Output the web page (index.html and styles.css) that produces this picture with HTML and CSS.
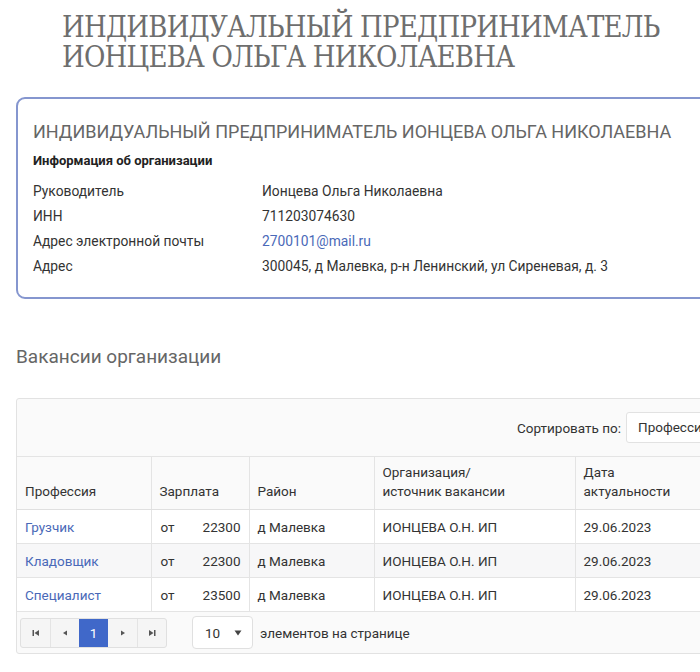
FILE: index.html
```html
<!DOCTYPE html>
<html lang="ru">
<head>
<meta charset="utf-8">
<link rel="stylesheet" href="styles.css">
</head>
<body>
<div class="page">
  <h1 class="title">ИНДИВИДУАЛЬНЫЙ ПРЕДПРИНИМАТЕЛЬ<br>ИОНЦЕВА ОЛЬГА НИКОЛАЕВНА</h1>
  <div class="card">
    <div class="card-title">ИНДИВИДУАЛЬНЫЙ ПРЕДПРИНИМАТЕЛЬ ИОНЦЕВА ОЛЬГА НИКОЛАЕВНА</div>
    <div class="card-sub">Информация об организации</div>
    <div class="info">
      <div class="lbl">Руководитель</div><div class="val">Ионцева Ольга Николаевна</div>
      <div class="lbl">ИНН</div><div class="val">711203074630</div>
      <div class="lbl">Адрес электронной почты</div><div class="val"><a class="link" href="#">2700101@mail.ru</a></div>
      <div class="lbl">Адрес</div><div class="val">300045, д Малевка, р-н Ленинский, ул Сиреневая, д. 3</div>
    </div>
  </div>
  <h2 class="section">Вакансии организации</h2>
  <div class="grid">
    <div class="toolbar">
      <span class="sort-label">Сортировать по:</span>
      <div class="sort-select">Профессия</div>
    </div>
    <table class="tbl">
      <colgroup>
        <col class="c1"><col class="c2"><col class="c3"><col class="c4"><col class="c5">
      </colgroup>
      <thead>
        <tr>
          <th>Профессия</th>
          <th>Зарплата</th>
          <th>Район</th>
          <th>Организация/<br>источник вакансии</th>
          <th>Дата<br>актуальности</th>
        </tr>
      </thead>
      <tbody>
        <tr>
          <td><a class="link" href="#">Грузчик</a></td>
          <td><div class="sal"><span>от</span><span>22300</span></div></td>
          <td>д Малевка</td>
          <td>ИОНЦЕВА О.Н. ИП</td>
          <td>29.06.2023</td>
        </tr>
        <tr class="alt">
          <td><a class="link" href="#">Кладовщик</a></td>
          <td><div class="sal"><span>от</span><span>22300</span></div></td>
          <td>д Малевка</td>
          <td>ИОНЦЕВА О.Н. ИП</td>
          <td>29.06.2023</td>
        </tr>
        <tr>
          <td><a class="link" href="#">Специалист</a></td>
          <td><div class="sal"><span>от</span><span>23500</span></div></td>
          <td>д Малевка</td>
          <td>ИОНЦЕВА О.Н. ИП</td>
          <td>29.06.2023</td>
        </tr>
      </tbody>
    </table>
    <div class="pager">
      <div class="pbtns">
        <span class="pb"><svg width="8" height="8" viewBox="0 0 8 8"><rect x="0.5" y="1" width="1.5" height="6" fill="#555"/><path d="M7 1 L2.5 4 L7 7 Z" fill="#555"/></svg></span>
        <span class="pb"><svg width="8" height="8" viewBox="0 0 8 8"><path d="M6 1.5 L2 4 L6 6.5 Z" fill="#555"/></svg></span>
        <span class="pb active">1</span>
        <span class="pb"><svg width="8" height="8" viewBox="0 0 8 8"><path d="M2 1.5 L6 4 L2 6.5 Z" fill="#555"/></svg></span>
        <span class="pb"><svg width="8" height="8" viewBox="0 0 8 8"><path d="M1 1 L5.5 4 L1 7 Z" fill="#555"/><rect x="6" y="1" width="1.5" height="6" fill="#555"/></svg></span>
      </div>
      <div class="psize"><span>10</span><svg width="8" height="6" viewBox="0 0 8 6"><path d="M0.5 0.5 L7.5 0.5 L4 5.5 Z" fill="#444"/></svg></div>
      <span class="pinfo">элементов на странице</span>
    </div>
  </div>
</div>
</body>
</html>
```
FILE: styles.css
```css
html, body {
  margin: 0;
  padding: 0;
  background: #fff;
  overflow-x: hidden;
}
body {
  font-family: Roboto, "Liberation Sans", Arial, sans-serif;
  color: #333;
  font-size: 13px;
}
.page {
  width: 760px;
  padding: 12px 0 0 16px;
}
.title {
  margin: 0 0 0 46px;
  font-family: "DejaVu Serif Condensed", "DejaVu Serif", serif;
  font-weight: normal;
  font-size: 29px;
  line-height: 30px;
  color: #6e6e6e;
  letter-spacing: -0.8px;
}
.card {
  margin-top: 25px;
  border: 2px solid #8596cf;
  border-radius: 9px;
  padding: 22px 16px 16px 15px;
  height: 160px;
}
.card-title {
  font-size: 18px;
  color: #666;
  line-height: 22px;
}
.card-sub {
  font-weight: bold;
  font-size: 13px;
  margin-top: 9px;
  line-height: 18px;
  color: #222;
}
.info {
  display: grid;
  grid-template-columns: 229px 1fr;
  grid-auto-rows: 25px;
  margin-top: 9px;
  font-size: 13.8px;
  color: #333;
}
.info .lbl, .info .val {
  line-height: 25px;
}
.link {
  color: #4a69b8;
  text-decoration: none;
}
.section {
  margin: 46px 0 0 0;
  font-weight: normal;
  font-size: 19px;
  line-height: 24px;
  color: #666;
}
.grid {
  margin-top: 29px;
  border: 1px solid #e2e2e2;
  border-radius: 3px;
  background: #fafafa;
}
.toolbar {
  height: 58px;
  display: flex;
  align-items: center;
  padding-left: 500px;
  border-bottom: 1px solid #e4e4e4;
  box-sizing: border-box;
}
.sort-label {
  font-size: 13.5px;
  color: #333;
}
.sort-select {
  margin-left: 5px;
  height: 31px;
  width: 140px;
  border: 1px solid #e2e2e2;
  border-radius: 3px;
  background: #fff;
  box-sizing: border-box;
  padding-left: 11px;
  line-height: 29px;
  font-size: 13.5px;
  color: #333;
}
.tbl {
  border-collapse: collapse;
  width: 740px;
  table-layout: fixed;
  font-size: 13.5px;
}
.c1 { width: 134px; }
.c2 { width: 98px; }
.c3 { width: 125px; }
.c4 { width: 201px; }
.c5 { width: 182px; }
.tbl th {
  height: 44px;
  vertical-align: bottom;
  text-align: left;
  font-weight: normal;
  color: #333;
  padding: 0 8px 8px 8px;
  line-height: 19px;
  border-left: 1px solid #e4e4e4;
  border-bottom: 1px solid #e0e0e0;
  background: #fafafa;
}
.tbl th:first-child, .tbl td:first-child {
  border-left: none;
}
.tbl td {
  height: 33px;
  padding: 0 8px;
  border-left: 1px solid #e4e4e4;
  border-bottom: 1px solid #e4e4e4;
  background: #fff;
  color: #333;
  white-space: nowrap;
}
.tbl tr.alt td {
  background: #f7f7f8;
}
.sal {
  display: flex;
  justify-content: space-between;
  padding-left: 1px;
}
.pager {
  height: 41px;
  display: flex;
  align-items: center;
  padding-left: 3px;
}
.pbtns {
  display: flex;
  height: 30px;
  border: 1px solid #e0e0e0;
  border-radius: 3px;
  background: #f5f5f5;
  box-sizing: border-box;
}
.pb {
  width: 29px;
  height: 28px;
  display: flex;
  align-items: center;
  justify-content: center;
  border-left: 1px solid #e4e4e4;
  font-size: 13.5px;
  box-sizing: border-box;
}
.pb:first-child { border-left: none; }
.pb.active {
  background: #4068c9;
  color: #fff;
  border-left: none;
}
.pb.active + .pb { border-left: none; }
.psize {
  margin-left: 25px;
  width: 61px;
  height: 33px;
  border: 1px solid #e0e0e0;
  border-radius: 4px;
  background: #fff;
  box-sizing: border-box;
  display: flex;
  align-items: center;
  justify-content: space-between;
  padding: 0 10px 0 12px;
  font-size: 13.5px;
  color: #333;
}
.pinfo {
  margin-left: 7px;
  font-size: 13.5px;
  color: #333;
}
```
